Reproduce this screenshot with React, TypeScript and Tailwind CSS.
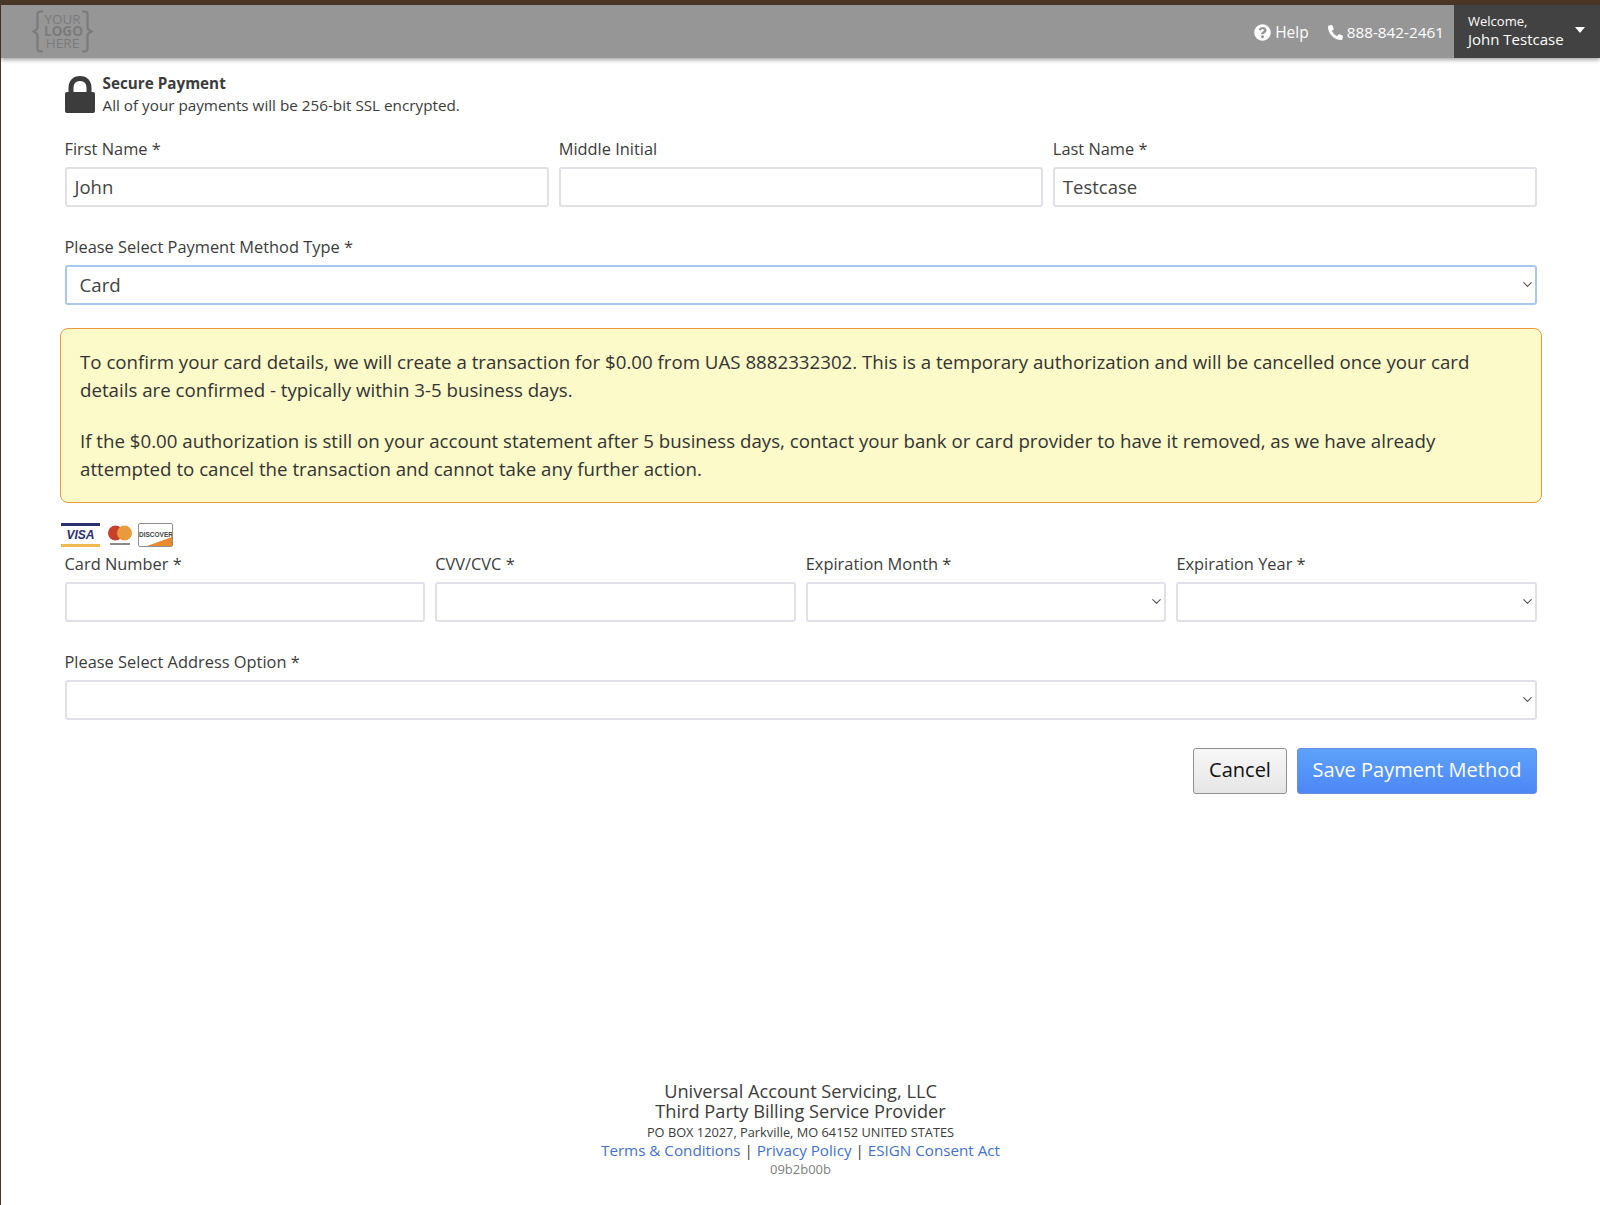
import { ChevronDown } from 'lucide-react';
import { FaPhoneAlt, FaQuestionCircle } from 'react-icons/fa';

function Label({ text }: { text: string }) {
  return <label className="block h-[20px] text-[16.4px] leading-[20px] text-[#3c3c3c]">{text}</label>;
}

function TextField({ label, value }: { label: string; value?: string }) {
  return (
    <div className="flex-1 min-w-0">
      <Label text={label} />
      <div className="mt-[8px] flex h-[39.5px] items-center rounded-[3px] border-2 border-[#e0e1e8] bg-white pl-[8px] text-[18.5px] text-[#444]">
        {value}
      </div>
    </div>
  );
}

function SelectField({ label, value, focused }: { label: string; value?: string; focused?: boolean }) {
  return (
    <div className="flex-1 min-w-0">
      <Label text={label} />
      <div
        className={
          focused
            ? 'mt-[8px] flex h-[39.5px] items-center justify-between rounded-[3px] border-2 border-[#a8c8ee] bg-white pl-[13px] text-[18.7px] text-[#444]'
            : 'mt-[8px] flex h-[39.5px] items-center justify-between rounded-[3px] border-2 border-[#e0e1e8] bg-white pl-[13px] text-[18.7px] text-[#444]'
        }
      >
        <span className="pt-[1px]">{value}</span>
        <ChevronDown size={15} strokeWidth={1.75} className="text-[#555]" />
      </div>
    </div>
  );
}

function CardLogos() {
  return (
    <div className="flex h-[24px] items-center">
      <div className="flex h-[24px] w-[39px] flex-col justify-between bg-white">
        <div className="h-[3px] bg-[#2a2f6e]" />
        <div className="text-center font-['Liberation_Sans',sans-serif] text-[12px] leading-[14px] font-bold italic text-[#2a2f6e]">VISA</div>
        <div className="h-[3px] bg-[#efb94e]" />
      </div>
      <svg className="ml-[8px]" width="24" height="23" viewBox="0 0 24 23">
        <circle cx="7.5" cy="9" r="7.5" fill="#c8402a" />
        <circle cx="16.5" cy="9" r="7.5" fill="#e99a3c" />
        <rect x="2" y="19" width="20" height="2" fill="#8a8a8a" />
      </svg>
      <div className="relative ml-[6px] h-[24px] w-[35px] overflow-hidden rounded-[2px] border border-[#8d8d8d] bg-white">
        <svg className="absolute bottom-0 right-0" width="33" height="12" viewBox="0 0 33 12">
          <polygon points="33,3 33,12 8,12" fill="#ea8a2c" />
        </svg>
        <div className="absolute inset-x-0 top-[7px] text-center font-['Liberation_Sans',sans-serif] text-[6.5px] leading-[8px] font-bold text-[#444]">DISCOVER</div>
      </div>
    </div>
  );
}

function LogoBrace({ flip }: { flip?: boolean }) {
  return (
    <svg width="12" height="43" viewBox="0 0 12 43" className={flip ? '-scale-x-100' : ''}>
      <path
        d="M11 1.5H8.5C6.5 1.5 5.5 2.5 5.5 4.5V17C5.5 19 4 20.5 1.5 21.5C4 22.5 5.5 24 5.5 26V38.5C5.5 40.5 6.5 41.5 8.5 41.5H11"
        fill="none"
        stroke="#7b7b7b"
        strokeWidth="2.2"
      />
    </svg>
  );
}

function LockIcon() {
  return (
    <svg width="30" height="37" viewBox="0 0 30 37" className="mb-[4px] shrink-0">
      <path d="M6 17V12C6 6 9.5 2.5 15 2.5S24 6 24 12V17" fill="none" stroke="#3c3c3c" strokeWidth="5" />
      <rect x="0" y="16" width="30" height="21" rx="2" fill="#3c3c3c" />
    </svg>
  );
}

export default function App() {
  return (
    <div className="flex min-h-[1205px] flex-col border-l border-[#4a3728] bg-white font-['Open_Sans',sans-serif] text-[#3c3c3c]">
      <div className="-ml-px h-[5px] bg-[#4a3728]" />
      <header className="flex h-[53px] items-stretch justify-between bg-[#969696] shadow-[0_2px_4px_rgba(0,0,0,0.35)]">
        <div className="flex items-center pl-[31px]">
          <div className="flex items-center text-[#7b7b7b]">
            <LogoBrace />
            <div className="mb-[2px] w-[37px] text-center text-[13.5px] leading-[12px]">
              <div>YOUR</div>
              <div className="font-bold">LOGO</div>
              <div>HERE</div>
            </div>
            <LogoBrace flip />
          </div>
        </div>
        <div className="flex items-stretch">
          <div className="flex items-center gap-[4px] pt-[2px] text-[15.5px] text-white">
            <FaQuestionCircle size={17} />
            <span>Help</span>
          </div>
          <div className="ml-[19px] flex items-center gap-[4px] pr-[10px] pt-[1px] text-[15.3px] text-white">
            <FaPhoneAlt size={15} />
            <span>888-842-2461</span>
          </div>
          <div className="flex w-[146px] items-center justify-between bg-[#424242] pl-[14px] pr-[15px] text-white">
            <div className="mb-[2px]">
              <div className="text-[13px] leading-[17px]">Welcome,</div>
              <div className="text-[15px] leading-[18px]">John Testcase</div>
            </div>
            <div className="mb-[4px] h-0 w-0 border-x-[5.5px] border-t-[6px] border-x-transparent border-t-white" />
          </div>
        </div>
      </header>

      <main className="pl-[63.5px] pr-[63px] pt-[16px]">
        <div className="flex items-center gap-[8px]">
          <LockIcon />
          <div>
            <div className="text-[15.25px] leading-[19px] font-bold">Secure Payment</div>
            <div className="text-[15.25px] leading-[25px]">All of your payments will be 256-bit SSL encrypted.</div>
          </div>
        </div>

        <div className="mt-[21px] flex gap-[10px]">
          <TextField label="First Name *" value="John" />
          <TextField label="Middle Initial" />
          <TextField label="Last Name *" value="Testcase" />
        </div>

        <div className="mt-[30.5px]">
          <SelectField label="Please Select Payment Method Type *" value="Card" focused />
        </div>

        <div className="ml-[-4.5px] mr-[-5px] mt-[23.5px] h-[175px] rounded-[8px] border border-[#ec9a3c] bg-[#fcfac8] pl-[19px] pr-[19px] pt-[19px] text-[18.7px] leading-[28px] text-[#333]">
          <p>
            To confirm your card details, we will create a transaction for $0.00 from UAS 8882332302. This is a temporary authorization and will be cancelled once your card details are confirmed - typically within 3-5 business days.
          </p>
          <p className="mt-[23px]">
            If the $0.00 authorization is still on your account statement after 5 business days, contact your bank or card provider to have it removed, as we have already attempted to cancel the transaction and cannot take any further action.
          </p>
        </div>

        <div className="-ml-[3.5px] mt-[20px]">
          <CardLogos />
        </div>

        <div className="mt-[7px] flex gap-[10px]">
          <TextField label="Card Number *" />
          <TextField label="CVV/CVC *" />
          <SelectField label="Expiration Month *" />
          <SelectField label="Expiration Year *" />
        </div>

        <div className="mt-[30.5px]">
          <SelectField label="Please Select Address Option *" />
        </div>

        <div className="mt-[28.5px] flex justify-end gap-[10px]">
          <button className="h-[46px] w-[94px] rounded-[3px] border border-[#8f8f8f] bg-gradient-to-b from-[#f7f7f7] to-[#e6e6e6] pb-[2px] text-[20px] text-[#111]">
            Cancel
          </button>
          <button className="h-[46px] w-[240px] rounded-[3px] border border-[#6a8fe0] bg-gradient-to-b from-[#5da2fb] to-[#4d87f5] pb-[2px] text-[20px] text-white">
            Save Payment Method
          </button>
        </div>
      </main>

      <footer className="mt-auto pb-[24px] text-center text-[#3c3c3c]">
        <div className="text-[18.2px] leading-[20px]">Universal Account Servicing, LLC</div>
        <div className="text-[18.2px] leading-[20px]">Third Party Billing Service Provider</div>
        <div className="text-[12.8px] leading-[22px]">PO BOX 12027, Parkville, MO 64152 UNITED STATES</div>
        <div className="text-[15.2px] leading-[14px]">
          <a className="text-[#4472c9]">Terms &amp; Conditions</a> | <a className="text-[#4472c9]">Privacy Policy</a> | <a className="text-[#4472c9]">ESIGN Consent Act</a>
        </div>
        <div className="text-[13px] leading-[24px] text-[#808080]">09b2b00b</div>
      </footer>
    </div>
  );
}
